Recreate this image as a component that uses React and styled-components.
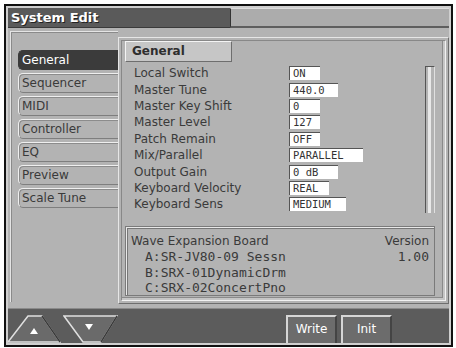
import React from "react";
import styled, { createGlobalStyle } from "styled-components";

const GlobalStyle = createGlobalStyle`
  html, body {
    margin: 0;
    padding: 0;
    background: #ffffff;
  }
`;

const Frame = styled.div`
  margin: 4px 0 0 4px;
  width: 449px;
  height: 343px;
  box-sizing: border-box;
  border: 2px solid #111;
  background: #cfcfcf;
  padding: 2px;
  display: flex;
  flex-direction: column;
  font-family: "DejaVu Sans", "Liberation Sans", sans-serif;
`;

const TitleBar = styled.div`
  height: 20px;
  display: flex;
`;

const TitleTab = styled.div`
  width: 222px;
  background: #5a5a5a;
  border-bottom: 1px solid #3a3a3a;
  color: #fff;
  font-weight: bold;
  font-size: 13px;
  line-height: 19px;
  padding-left: 3px;
  text-shadow: 1px 1px 0 #222;
  box-sizing: border-box;
`;

const TitleRest = styled.div`
  flex: 1;
  background: #acacac;
  border-top: 1px solid #dedede;
  border-left: 1px solid #333;
  border-bottom: 2px solid #5e5e5e;
  box-sizing: border-box;
`;

const Body = styled.div`
  height: 280px;
  display: flex;
  background: #b3b3b3;
`;

const TabColumn = styled.div`
  width: 108px;
  margin: 3px 0 6px 2px;
  padding: 18px 0 0 7px;
  border-top: 1px solid #e4e4e4;
  border-left: 1px solid #e4e4e4;
  box-shadow: inset 1px 1px 0 #8a8a8a;
  display: flex;
  flex-direction: column;
  gap: 3px;
  box-sizing: border-box;
`;

const Tab = styled.div`
  height: 20px;
  box-sizing: border-box;
  padding-left: 3px;
  font-size: 12px;
  line-height: 18px;
  border-radius: 5px 0 0 5px;
  color: ${(p) => (p.$active ? "#fff" : "#3a3a3a")};
  background: ${(p) => (p.$active ? "#3b3b3b" : "#b3b3b3")};
  border-top: 1px solid ${(p) => (p.$active ? "#3b3b3b" : "#efefef")};
  border-left: 1px solid ${(p) => (p.$active ? "#3b3b3b" : "#efefef")};
  border-bottom: 1px solid ${(p) => (p.$active ? "#3b3b3b" : "#7e7e7e")};
  box-shadow: ${(p) => (p.$active ? "none" : "inset 1px 1px 0 #8c8c8c")};
`;

const RightPanel = styled.div`
  flex: 1;
  margin: 9px 0 4px 0;
  border-top: 1px solid #e6e6e6;
  border-left: 1px solid #e6e6e6;
  border-right: 1px solid #6e6e6e;
  border-bottom: 1px solid #6e6e6e;
  padding: 2px;
  display: flex;
  box-sizing: border-box;
`;

const RightInner = styled.div`
  flex: 1;
  border-top: 1px solid #888;
  border-left: 1px solid #888;
  border-right: 1px solid #f2f2f2;
  border-bottom: 1px solid #f2f2f2;
  box-shadow: inset -2px -2px 0 #c6c6c6, inset -3px -3px 0 #8a8a8a;
  padding: 0 10px 4px 3px;
  display: flex;
  flex-direction: column;
  box-sizing: border-box;
`;

const Header = styled.div`
  width: 107px;
  height: 21px;
  box-sizing: border-box;
  background: #c6c6c6;
  border-top: 1px solid #f4f4f4;
  border-left: 1px solid #f4f4f4;
  border-right: 1px solid #6e6e6e;
  border-bottom: 1px solid #6e6e6e;
  font-weight: bold;
  font-size: 12px;
  line-height: 19px;
  padding-left: 6px;
  color: #2e2e2e;
`;

const ParamArea = styled.div`
  display: flex;
  margin-top: 3px;
  height: 150px;
`;

const ParamList = styled.div`
  flex: 1;
  display: flex;
  flex-direction: column;
  padding-left: 9px;
`;

const Row = styled.div`
  height: 16.4px;
  display: flex;
  align-items: center;
`;

const Label = styled.div`
  width: 155px;
  font-size: 12px;
  color: #3a3a3a;
  white-space: nowrap;
`;

const Value = styled.div`
  width: ${(p) => p.$w}px;
  height: 14px;
  box-sizing: border-box;
  background: #fff;
  border-top: 1px solid #555;
  border-left: 1px solid #555;
  font-family: "DejaVu Sans Mono", "Liberation Mono", monospace;
  font-size: 10.5px;
  line-height: 13px;
  padding-left: 3px;
  color: #333;
`;

const Scroll = styled.div`
  width: 10px;
  height: 147px;
  margin-top: 1px;
  box-sizing: border-box;
  border-top: 1px solid #555;
  border-left: 1px solid #555;
  border-right: 1px solid #e0e0e0;
  background: linear-gradient(to right, #b3b3b3 2px, #e8e8e8 2px, #e8e8e8 5px, #b3b3b3 5px);
`;

const WaveBox = styled.div`
  margin-top: 11px;
  flex: 1;
  border-top: 2px solid #e8e8e8;
  border-left: 2px solid #e8e8e8;
  box-shadow: inset 1px 1px 0 #777;
  outline: 1px solid #7a7a7a;
  outline-offset: -1px;
  padding: 5px 6px 0 4px;
  color: #3a3a3a;
  box-sizing: border-box;
`;

const WaveHead = styled.div`
  display: flex;
  justify-content: space-between;
  font-size: 12px;
  height: 16px;
  line-height: 16px;
`;

const WaveRow = styled.div`
  display: flex;
  justify-content: space-between;
  font-family: "DejaVu Sans Mono", "Liberation Mono", monospace;
  font-size: 13px;
  height: 15.5px;
  line-height: 15.5px;
  padding-left: 14px;
`;

const BottomBar = styled.div`
  flex: 1;
  background: #5c5c5c;
  border-top: 1px solid #8a8a8a;
  display: flex;
  align-items: flex-end;
`;

const ArrowRow = styled.div`
  display: flex;
  gap: 2px;
  height: 28px;
`;

const Spacer = styled.div`
  flex: ${(p) => (p.$w ? `0 0 ${p.$w}px` : 1)};
`;

const Button = styled.div`
  width: ${(p) => p.$w}px;
  height: 28px;
  margin-right: 4px;
  box-sizing: border-box;
  background: #6c6c6c;
  border-top: 2px solid #d6d6d6;
  border-left: 2px solid #d6d6d6;
  border-right: 2px solid #444;
  color: #fff;
  font-size: 12px;
  text-align: center;
  line-height: 24px;
`;

const params = [
  ["Local Switch", "ON", 31],
  ["Master Tune", "440.0", 49],
  ["Master Key Shift", "0", 31],
  ["Master Level", "127", 31],
  ["Patch Remain", "OFF", 31],
  ["Mix/Parallel", "PARALLEL", 74],
  ["Output Gain", "0 dB", 49],
  ["Keyboard Velocity", "REAL", 40],
  ["Keyboard Sens", "MEDIUM", 57],
];

const tabs = ["General", "Sequencer", "MIDI", "Controller", "EQ", "Preview", "Scale Tune"];

const UpArrow = () => (
  <svg width="53" height="28" viewBox="0 0 53 28">
    <polygon points="0,27 20,1 34,1 52,27" fill="#6a6a6a" stroke="#e0e0e0" strokeWidth="1.5" />
    <line x1="52" y1="27" x2="34" y2="1" stroke="#3a3a3a" strokeWidth="1.5" />
    <polygon points="22,19 26,13 30,19" fill="#fff" />
  </svg>
);

const DownArrow = () => (
  <svg width="55" height="28" viewBox="0 0 55 28">
    <polygon points="1,1 54,1 38,27 20,27" fill="#6a6a6a" stroke="#e0e0e0" strokeWidth="1.5" />
    <line x1="54" y1="1" x2="38" y2="27" stroke="#3a3a3a" strokeWidth="1.5" />
    <polygon points="22,9 30,9 26,15" fill="#fff" />
  </svg>
);

export default function App() {
  return (
    <>
      <GlobalStyle />
      <Frame>
        <TitleBar>
          <TitleTab>System Edit</TitleTab>
          <TitleRest />
        </TitleBar>
        <Body>
          <TabColumn>
            {tabs.map((t, i) => (
              <Tab key={t} $active={i === 0}>
                {t}
              </Tab>
            ))}
          </TabColumn>
          <RightPanel>
            <RightInner>
              <Header>General</Header>
              <ParamArea>
                <ParamList>
                  {params.map(([label, value, w]) => (
                    <Row key={label}>
                      <Label>{label}</Label>
                      <Value $w={w}>{value}</Value>
                    </Row>
                  ))}
                </ParamList>
                <Scroll />
              </ParamArea>
              <WaveBox>
                <WaveHead>
                  <span>Wave Expansion Board</span>
                  <span>Version</span>
                </WaveHead>
                <WaveRow>
                  <span>A:SR-JV80-09 Sessn</span>
                  <span>1.00</span>
                </WaveRow>
                <WaveRow>
                  <span>B:SRX-01DynamicDrm</span>
                </WaveRow>
                <WaveRow>
                  <span>C:SRX-02ConcertPno</span>
                </WaveRow>
              </WaveBox>
            </RightInner>
          </RightPanel>
        </Body>
        <BottomBar>
          <ArrowRow>
            <UpArrow />
            <DownArrow />
          </ArrowRow>
          <Spacer />
          <Button $w={51}>Write</Button>
          <Button $w={51}>Init</Button>
          <Spacer $w={53} />
        </BottomBar>
      </Frame>
    </>
  );
}
